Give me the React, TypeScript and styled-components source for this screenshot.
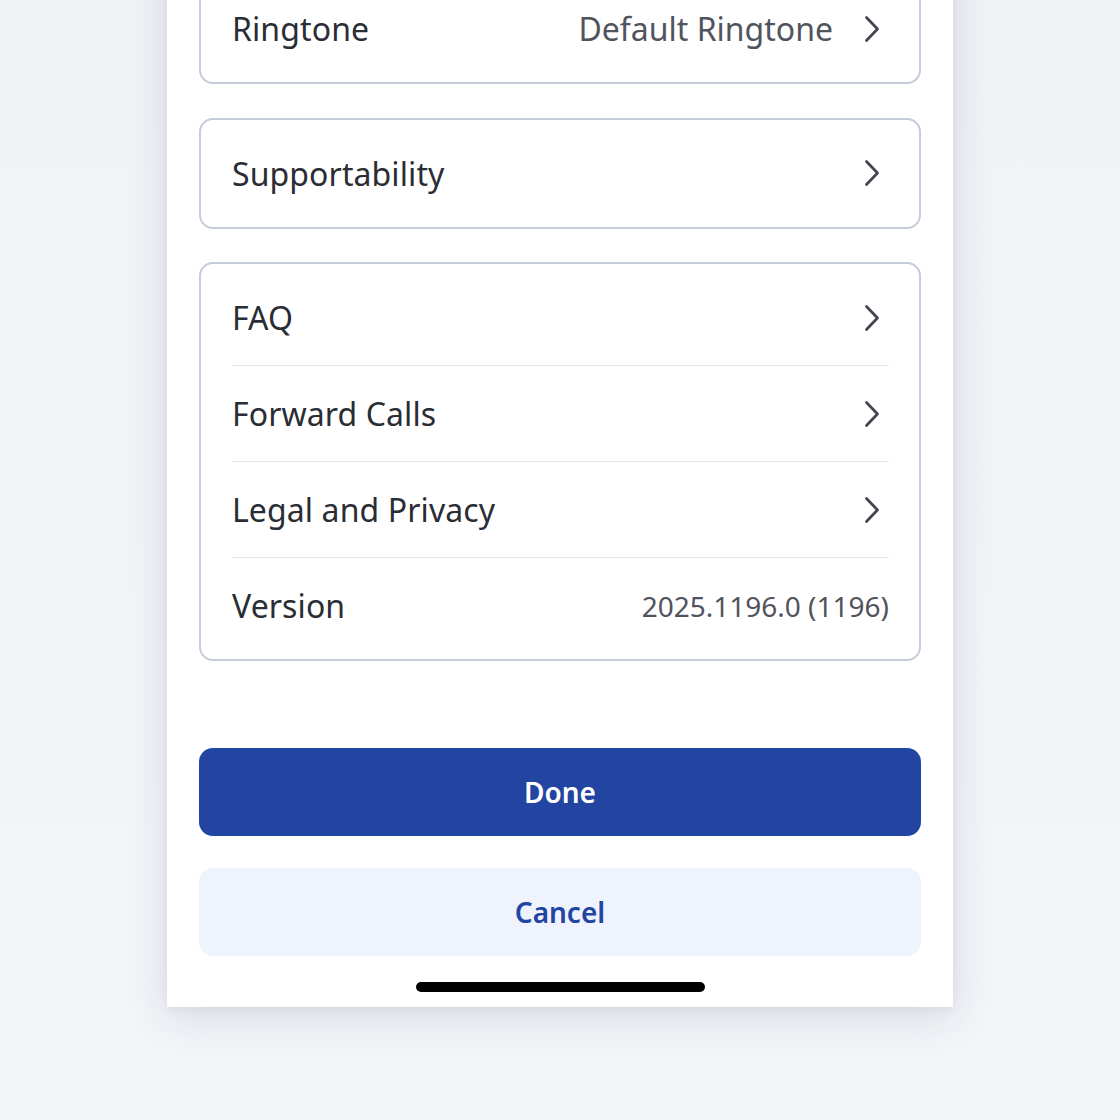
import React from "react";
import styled, { createGlobalStyle } from "styled-components";

const GlobalStyle = createGlobalStyle`
  html, body {
    margin: 0;
    padding: 0;
    height: 1120px;
    overflow: hidden;
    background: linear-gradient(180deg, #f1f2f6 0%, #f4f5f9 100%);
    font-family: "Noto Sans", "Open Sans", sans-serif;
  }
  * { box-sizing: border-box; }
`;

const Page = styled.div`
  display: flex;
  justify-content: center;
  align-items: flex-start;
  height: 1120px;
`;

const Panel = styled.div`
  width: 786px;
  margin-top: -59px;
  background: #ffffff;
  padding: 32px 32px 15px;
  display: flex;
  flex-direction: column;
  box-shadow: 0 10px 40px rgba(30, 40, 70, 0.13), 0 2px 8px rgba(30, 40, 70, 0.06);
`;

const Cards = styled.div`
  display: flex;
  flex-direction: column;
  gap: 33.5px;
`;

const Card = styled.div`
  border: 2px solid #c6ccdc;
  border-radius: 14px;
  padding: 6px 30px 6px 31px;
  display: flex;
  flex-direction: column;
`;

const Row = styled.div`
  height: 95px;
  display: flex;
  align-items: center;
  justify-content: space-between;
`;

const Divider = styled.div`
  height: 1px;
  background: #e2e5ed;
`;

const Label = styled.span`
  font-size: 32px;
  color: #2a2d34;
  letter-spacing: 0.1px;
`;

const Trailing = styled.div`
  display: flex;
  align-items: center;
  gap: 31px;
`;

const Value = styled.span<{ $small?: boolean }>`
  font-size: ${(p) => (p.$small ? "28px" : "32px")};
  color: #51545d;
`;

const ChevronBox = styled.svg`
  width: 16px;
  height: 28px;
  margin-right: 9px;
  flex: none;
`;

const Buttons = styled.div`
  margin-top: 86.5px;
  display: flex;
  flex-direction: column;
  gap: 32px;
`;

const Button = styled.button<{ $primary?: boolean }>`
  height: 88px;
  width: 100%;
  border: none;
  border-radius: 14px;
  font-family: "Noto Sans", "Open Sans", sans-serif;
  font-size: 28px;
  font-weight: 600;
  background: ${(p) => (p.$primary ? "#2245a1" : "#eef3fe")};
  color: ${(p) => (p.$primary ? "#ffffff" : "#2245a1")};
  display: flex;
  align-items: center;
  justify-content: center;
  cursor: pointer;
`;

const HomeIndicator = styled.div`
  align-self: center;
  margin-top: 26px;
  width: 289px;
  height: 10px;
  border-radius: 5px;
  background: #000000;
`;

const Chevron = () => (
  <ChevronBox viewBox="0 0 16 28" fill="none">
    <polyline
      points="2.5,2.5 13.5,14 2.5,25.5"
      stroke="#42454f"
      strokeWidth="2.7"
      strokeLinecap="round"
      strokeLinejoin="round"
    />
  </ChevronBox>
);

type Item = { label: string; value?: string; chevron?: boolean; small?: boolean };

const groups: Item[][] = [
  [{ label: "Ringtone", value: "Default Ringtone", chevron: true }],
  [{ label: "Supportability", chevron: true }],
  [
    { label: "FAQ", chevron: true },
    { label: "Forward Calls", chevron: true },
    { label: "Legal and Privacy", chevron: true },
    { label: "Version", value: "2025.1196.0 (1196)", small: true },
  ],
];

export default function App() {
  return (
    <>
      <GlobalStyle />
      <Page>
        <Panel>
          <Cards>
            {groups.map((items, gi) => (
              <Card key={gi}>
                {items.map((it, i) => (
                  <React.Fragment key={it.label}>
                    {i > 0 && <Divider />}
                    <Row>
                      <Label>{it.label}</Label>
                      <Trailing>
                        {it.value && <Value $small={it.small}>{it.value}</Value>}
                        {it.chevron && <Chevron />}
                      </Trailing>
                    </Row>
                  </React.Fragment>
                ))}
              </Card>
            ))}
          </Cards>
          <Buttons>
            <Button $primary>Done</Button>
            <Button>Cancel</Button>
          </Buttons>
          <HomeIndicator />
        </Panel>
      </Page>
    </>
  );
}
